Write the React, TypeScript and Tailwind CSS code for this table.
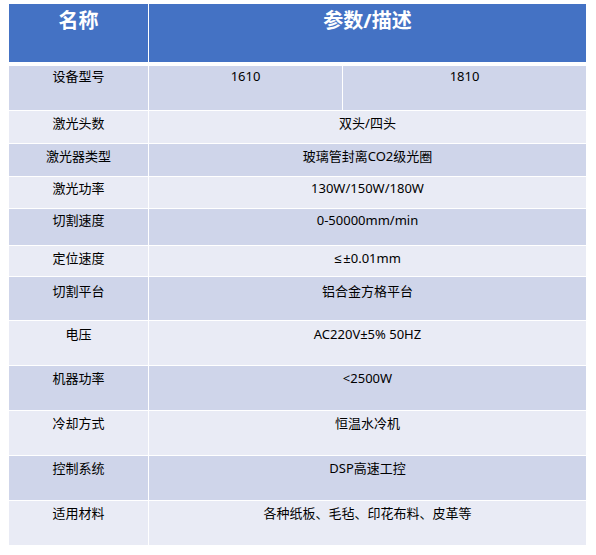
import type { ReactNode } from 'react';

const ROWS: { name: string; value: ReactNode; h: string; pt: string }[] = [
  { name: '激光头数', value: '双头/四头', h: 'h-[32px]', pt: 'pt-[4px]' },
  { name: '激光器类型', value: '玻璃管封离CO2级光圈', h: 'h-[32px]', pt: 'pt-[4px]' },
  { name: '激光功率', value: '130W/150W/180W', h: 'h-[31px]', pt: 'pt-[3px]' },
  { name: '切割速度', value: '0-50000mm/min', h: 'h-[36px]', pt: 'pt-[3px]' },
  {
    name: '定位速度',
    value: (
      <>
        <span className="font-['Liberation_Sans'] pr-[2px]">≤</span>±0.01mm
      </>
    ),
    h: 'h-[30px]',
    pt: 'pt-[4px]',
  },
  { name: '切割平台', value: '铝合金方格平台', h: 'h-[43px]', pt: 'pt-[6px]' },
  { name: '电压', value: 'AC220V±5% 50HZ', h: 'h-[44px]', pt: 'pt-[5px]' },
  { name: '机器功率', value: '<2500W', h: 'h-[44px]', pt: 'pt-[4px]' },
  { name: '冷却方式', value: '恒温水冷机', h: 'h-[44px]', pt: 'pt-[4px]' },
  { name: '控制系统', value: 'DSP高速工控', h: 'h-[44px]', pt: 'pt-[4px]' },
  { name: '适用材料', value: '各种纸板、毛毡、印花布料、皮革等', h: 'h-[44px]', pt: 'pt-[4px]' },
];

export default function App() {
  return (
    <div
      className="min-h-screen bg-white pt-[4px] pl-[9px] text-[13px] leading-[17px] text-black"
      style={{ fontFamily: '"Noto Sans", "Noto Sans CJK SC", sans-serif' }}
    >
      <div className="w-[577px] flex flex-col gap-px">
        {/* Header */}
        <div className="flex h-[58px] gap-px mb-[3px] text-white font-bold text-[20px] leading-[28px]">
          <div className="w-[139px] bg-[#4472c4] pt-[3px] text-center">名称</div>
          <div className="flex-1 bg-[#4472c4] pt-[3px] text-center">参数/描述</div>
        </div>

        {/* Model row, split in two */}
        <div className="flex h-[44px] gap-px">
          <div className="w-[139px] bg-[#cfd5ea] pt-[2px] text-center">设备型号</div>
          <div className="flex-1 flex gap-px">
            <div className="w-[193px] bg-[#cfd5ea] pt-[2px] text-center">1610</div>
            <div className="flex-1 bg-[#cfd5ea] pt-[2px] text-center">1810</div>
          </div>
        </div>

        {ROWS.map((r, i) => {
          const bg = i % 2 === 0 ? 'bg-[#e9ebf5]' : 'bg-[#cfd5ea]';
          return (
            <div key={r.name} className={`flex gap-px ${r.h}`}>
              <div className={`w-[139px] text-center ${bg} ${r.pt}`}>{r.name}</div>
              <div className={`flex-1 text-center ${bg} ${r.pt}`}>{r.value}</div>
            </div>
          );
        })}
      </div>
    </div>
  );
}
